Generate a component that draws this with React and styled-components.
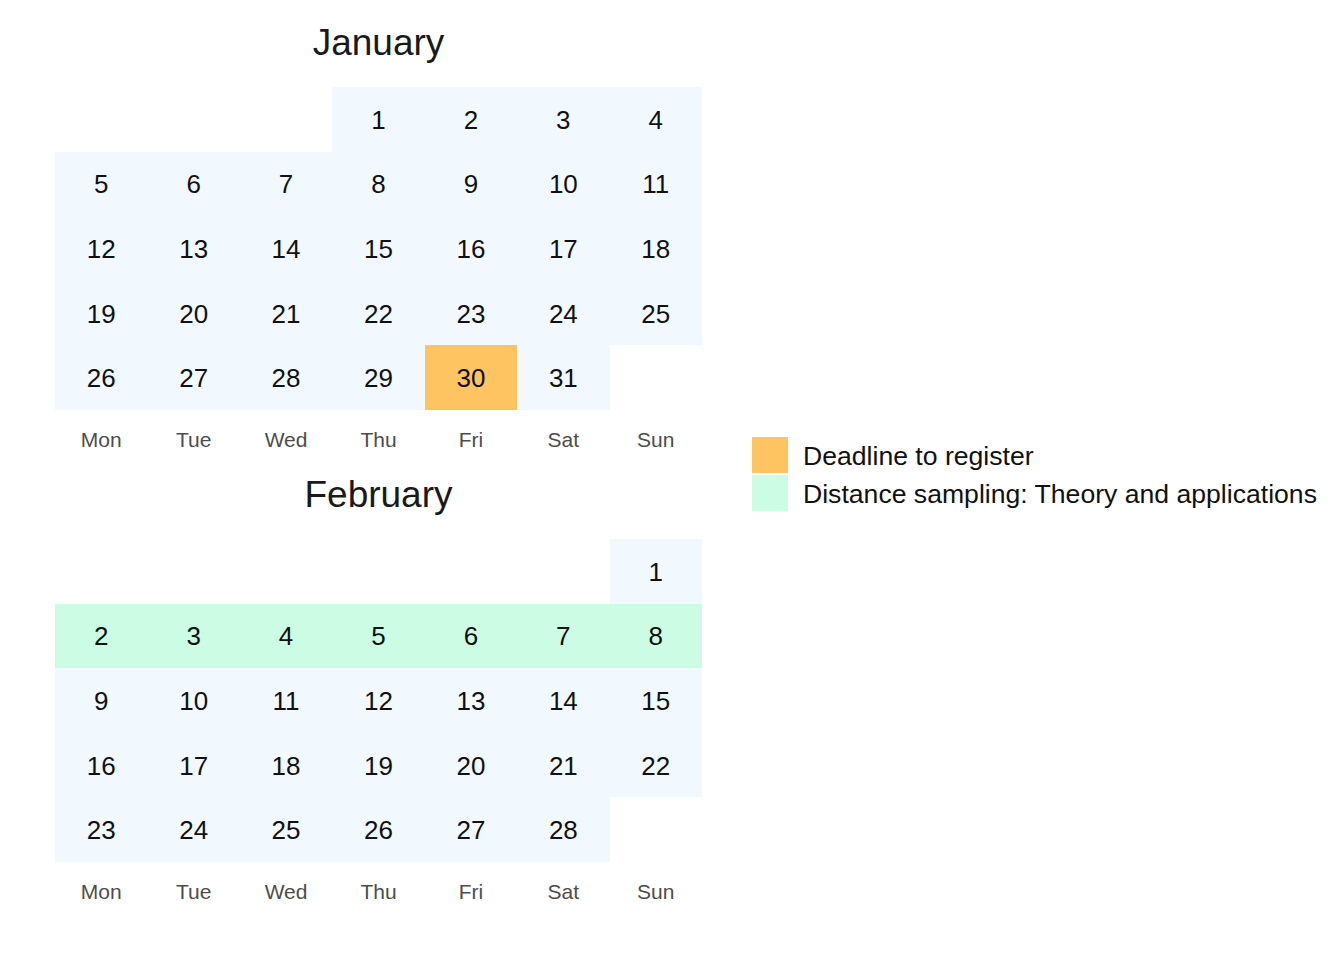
import React from "react";
import styled, { createGlobalStyle } from "styled-components";

const GlobalStyle = createGlobalStyle`
  html, body {
    margin: 0;
    padding: 0;
    background: #ffffff;
  }
  body {
    font-family: "Liberation Sans", Arial, sans-serif;
  }
`;

const weekdays = ["Mon", "Tue", "Wed", "Thu", "Fri", "Sat", "Sun"];

const colours = {
  base: "#F2F9FE",
  deadline: "#FEC462",
  course: "#CCFCE4",
};

const months = [
  {
    name: "January",
    offset: 3,
    days: 31,
    marks: { 30: "deadline" },
  },
  {
    name: "February",
    offset: 6,
    days: 28,
    marks: { 2: "course", 3: "course", 4: "course", 5: "course", 6: "course", 7: "course", 8: "course" },
  },
];

const legend = [
  { kind: "deadline", label: "Deadline to register" },
  { kind: "course", label: "Distance sampling: Theory and applications" },
];

const Page = styled.div`
  display: flex;
  align-items: center;
  width: 1344px;
  height: 960px;
  box-sizing: border-box;
  padding: 0 0 0 55px;
`;

const Calendars = styled.div`
  display: flex;
  flex-direction: column;
  align-self: flex-start;
  padding-top: 18px;
`;

const Month = styled.div`
  display: flex;
  flex-direction: column;
  width: 647px;
`;

const Title = styled.div`
  height: 69px;
  line-height: 50px;
  text-align: center;
  font-size: 37px;
  color: #1a1a1a;
`;

const Grid = styled.div`
  display: grid;
  grid-template-columns: repeat(7, 1fr);
  grid-template-rows: repeat(5, 1fr);
  height: 323px;
`;

const Day = styled.div`
  display: flex;
  align-items: center;
  justify-content: center;
  padding-top: 2px;
  font-size: 26px;
  color: #111;
  background: ${(p) => (p.$kind ? colours[p.$kind] : "transparent")};
`;

const Weekdays = styled.div`
  display: grid;
  grid-template-columns: repeat(7, 1fr);
  height: 60px;
  align-items: center;
`;

const Weekday = styled.div`
  text-align: center;
  font-size: 21px;
  color: #4d4d4d;
`;

const Legend = styled.div`
  display: flex;
  flex-direction: column;
  gap: 2px;
  margin-left: 50px;
  margin-top: -12px;
`;

const LegendRow = styled.div`
  display: flex;
  align-items: center;
  gap: 15px;
`;

const Swatch = styled.div`
  width: 36px;
  height: 36px;
  background: ${(p) => colours[p.$kind]};
`;

const LegendLabel = styled.span`
  font-size: 26.6px;
  padding-top: 2px;
  color: #111;
  white-space: nowrap;
`;

const MonthView = ({ month }) => {
  const cells = [];
  for (let i = 0; i < 35; i++) {
    const d = i - month.offset + 1;
    if (d < 1 || d > month.days) {
      cells.push(<Day key={i} />);
    } else {
      cells.push(
        <Day key={i} $kind={month.marks[d] || "base"}>
          {d}
        </Day>
      );
    }
  }
  return (
    <Month>
      <Title>{month.name}</Title>
      <Grid>{cells}</Grid>
      <Weekdays>
        {weekdays.map((w) => (
          <Weekday key={w}>{w}</Weekday>
        ))}
      </Weekdays>
    </Month>
  );
};

export default function App() {
  return (
    <>
      <GlobalStyle />
      <Page>
        <Calendars>
          {months.map((m) => (
            <MonthView key={m.name} month={m} />
          ))}
        </Calendars>
        <Legend>
          {legend.map((l) => (
            <LegendRow key={l.kind}>
              <Swatch $kind={l.kind} />
              <LegendLabel>{l.label}</LegendLabel>
            </LegendRow>
          ))}
        </Legend>
      </Page>
    </>
  );
}
